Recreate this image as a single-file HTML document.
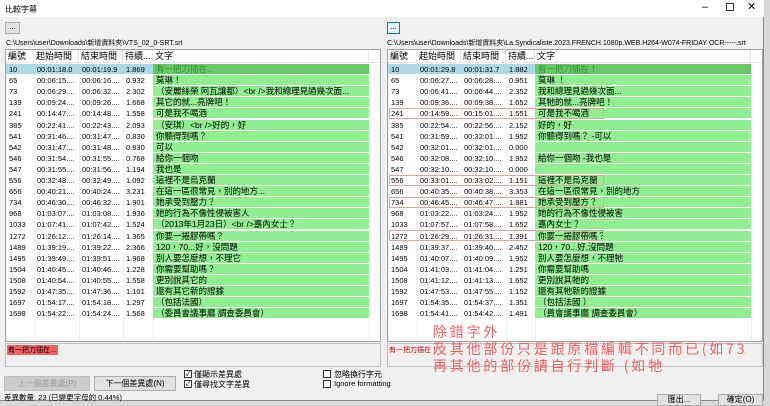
<!DOCTYPE html><html><head><meta charset="utf-8"><style>
*{margin:0;padding:0;box-sizing:border-box}
body{width:770px;height:403px;background:#d8d8d8;font-family:"Liberation Sans","Noto Sans CJK TC",sans-serif;position:relative;overflow:hidden;font-size:8px;color:#000}
.win{position:absolute;left:0;top:0;width:764px;height:401px;background:#f0f0f0;border-right:1px solid #888;border-bottom:1px solid #888}
.title{position:absolute;left:0;top:0;width:764px;height:17px;background:#fff;}
.a{position:absolute;white-space:nowrap}
.btn{position:absolute;background:#e1e1e1;border:1px solid #adadad;text-align:center;font-size:8px}
.grid{position:absolute;top:49px;height:293px;background:#fff;border:1px solid #a0a0a0;overflow:hidden}
.row{position:absolute;left:0;height:11px;width:100%;font-size:7.5px;line-height:11px}
.row span{position:absolute;top:0}
.hd{position:absolute;top:0;left:0;width:100%;height:13px;font-size:9px;line-height:13px;border-bottom:1px solid #e5e5e5}
.hd span{position:absolute;top:0;border-right:1px solid #e5e5e5;height:13px;padding-left:2px}
.g{position:absolute;top:0;height:10px;background:#90ee90}
.t{font-size:8.5px}
.vl{position:absolute;top:13px;bottom:0;width:1px;background:#efefef}
.rb{position:absolute;border:1px solid #e8a0a0;height:11px}
.cb{position:absolute;width:8px;height:8px;border:1px solid #333;background:#fff;font-size:7px;line-height:7px;text-align:center}
.note{position:absolute;color:#f06060;font-family:"WenQuanYi Zen Hei","Noto Sans CJK TC",sans-serif;font-size:14px;letter-spacing:2.8px;white-space:nowrap}
</style></head><body>
<div class="win">
<div class="title"><span class="a" style="left:5px;top:4px;font-size:8px">比較字幕</span>
<span class="a" style="left:702px;top:1px;font-size:11px">–</span>
<span class="a" style="left:726px;top:3px;width:8px;height:8px;border:1px solid #333"></span>
<span class="a" style="left:747px;top:0px;font-size:11px">✕</span></div>

<div class="btn" style="left:5px;top:22px;width:15px;height:12px;line-height:8px">...</div>
<div class="btn" style="left:387px;top:22px;width:13px;height:12px;line-height:8px;border-color:#0078d7;background:#e5f1fb">...</div>
<span class="a" style="left:6px;top:38px;font-size:7px">C:\Users\user\Downloads\新增資料夾\VTS_02_0-SRT.srt</span>
<span class="a" style="left:387px;top:38px;font-size:7px">C:\Users\user\Downloads\新增資料夾\La.Syndicaliste.2023.FRENCH.1080p.WEB.H264-W074-FRIDAY OCR-----.srt</span>

<div class="grid" id="L" style="left:5px;width:376px"></div>
<div class="grid" id="R" style="left:387px;width:376px"></div>

<div class="a" style="left:5px;top:343px;width:376px;height:24px;border:1px solid #c0c0c0;background:#f0f0f0"><span class="a" style="left:1px;top:1px;background:#f06060;font-size:7px;padding:0 1px">有一把刀插在…</span></div>
<div class="a" style="left:387px;top:343px;width:376px;height:24px;border:1px solid #c0c0c0;background:#f0f0f0"><span class="a" style="left:1px;top:1px;color:#c00;font-size:7px">有一把刀插在！</span></div>

<div class="btn" style="left:4px;top:376px;width:86px;height:15px;line-height:13px;color:#999;background:#ccc;border-color:#bfbfbf">上一個差異處(P)</div>
<div class="btn" style="left:94px;top:376px;width:82px;height:15px;line-height:13px">下一個差異處(N)</div>
<div class="cb" style="left:184px;top:370px">✓</div><span class="a" style="left:194px;top:369px">僅顯示差異處</span>
<div class="cb" style="left:184px;top:380px">✓</div><span class="a" style="left:194px;top:379px">僅尋找文字差異</span>
<div class="cb" style="left:323px;top:370px"></div><span class="a" style="left:334px;top:369px">忽略換行字元</span>
<div class="cb" style="left:323px;top:380px"></div><span class="a" style="left:334px;top:379px;font-size:7.5px">Ignore formatting</span>
<span class="a" style="left:4px;top:392px;font-size:7.5px">差異數量: 23 (已變更字母的 0.44%)</span>
<div class="btn" style="left:657px;top:394px;width:44px;height:12px;line-height:10px">匯出...</div>
<div class="btn" style="left:718px;top:394px;width:45px;height:12px;line-height:10px">確定(O)</div>

<div class="note" style="left:433px;top:322px">除錯字外</div>
<div class="note" style="left:433px;top:339px">及其他部份只是跟原檔編輯不同而已(如73</div>
<div class="note" style="left:433px;top:356px">再其他的部份請自行判斷 (如牠</div>
</div>
<script>
var L=[["10","00:01:18.0","00:01:19.9","1.869","有一把刀插在..."],["65","00:06:15....","00:06:16....","0.932","莫琳！"],["73","00:06:29....","00:06:32....","2.302","（安麗絲榮 阿瓦讓都）<br />我和總理見過幾次面..."],["139","00:09:24....","00:09:26....","1.668","其它的就...亮牌吧！"],["241","00:14:47....","00:14:48....","1.558","可是我不喝酒"],["385","00:22:41....","00:22:43....","2.093","（安琪）<br />好的，好"],["541","00:31:46....","00:31:47....","0.830","你聽得到嗎？"],["542","00:31:47....","00:31:48....","0.830","可以"],["546","00:31:54....","00:31:55....","0.768","給你一個吻"],["547","00:31:55....","00:31:56....","1.194","我也是"],["556","00:32:48....","00:32:49....","1.092","這裡不是烏克蘭"],["656","00:40:21....","00:40:24....","3.231","在這一區很常見，別的地方..."],["734","00:46:30....","00:46:32....","1.901","她承受到壓力？"],["968","01:03:07....","01:03:08....","1.936","她的行為不像性侵被害人"],["1033","01:07:41....","01:07:42....","1.524","（2013年1月23日）<br />嘉內女士？"],["1272","01:26:12....","01:26:14....","1.365","你要一捲膠帶嗎？"],["1489","01:39:19....","01:39:22....","2.366","120，70...好，沒問題"],["1495","01:39:49....","01:39:51....","1.968","別人要怎麼想，不理它"],["1504","01:40:45....","01:40:46....","1.228","你需要幫助嗎？"],["1508","01:40:54....","01:40:55....","1.558","更別說其它的"],["1592","01:47:35....","01:47:36....","1.101","還有其它新的證據"],["1697","01:54:17....","01:54:18....","1.297","（包括法國）"],["1698","01:54:22....","01:54:24....","1.568","（委員會議事廳 調查委員會）"]];
var R=[["10","00:01:29.8","00:01:31.7","1.882","有一把刀插在！"],["65","00:06:27....","00:06:28....","0.951","莫琳 ！"],["73","00:06:41....","00:06:44....","2.352","我和總理見過幾次面..."],["139","00:09:36....","00:09:38....","1.652","其牠的就...亮牌吧！"],["241","00:14:59....","00:15:01....","1.551","可是我不喝酒"],["385","00:22:54....","00:22:56....","2.152","好的，好"],["541","00:31:59....","00:32:01....","1.952","你聽得到嗎？  -可以"],["542","00:32:01....","00:32:01....","0.000",""],["546","00:32:08....","00:32:10....","1.952","給你一個吻  -我也是"],["547","00:32:10....","00:32:10....","0.000",""],["556","00:33:01....","00:33:02....","1.151","這裡不是烏克蘭"],["656","00:40:35....","00:40:38....","3.353","在這一區很常見，別的地方"],["734","00:46:45....","00:46:47....","1.881","她承受到壓方？"],["968","01:03:22....","01:03:24....","1.952","她的行為不像性侵被害"],["1033","01:07:57....","01:07:58....","1.652","嘉內女士？"],["1272","01:26:29....","01:26:31....","1.391","你要一捲膠帶嗎？"],["1489","01:39:37....","01:39:40....","2.452","120，70...好,沒問題"],["1495","01:40:07....","01:40:09....","1.952","別人要怎麼想，不理牠"],["1504","01:41:03....","01:41:04....","1.251","你需要幫助嗎"],["1508","01:41:12....","01:41:13....","1.652","更別說其牠的"],["1592","01:47:53....","01:47:55....","1.152","還有其牠新的證據"],["1697","01:54:35....","01:54:37....","1.351","（包括法國 ）"],["1698","01:54:41....","01:54:42....","1.491","（員會議事廳 調查委員會）"]];
function build(id,d,c,gw,boxes){var g=document.getElementById(id),h='<div class="hd">';var names=["編號","起始時間","結束時間","持續...","文字"];for(var i=0;i<5;i++){h+='<span style="left:'+c[i]+'px;width:'+((i<4?c[i+1]:c[4]+gw)-c[i])+'px">'+names[i]+'</span>';}h+='</div>';
for(var i=0;i<6;i++){h+='<div class="vl" style="left:'+(i<5?c[i]:c[4]+gw)+'px"></div>';}
for(var r=0;r<d.length;r++){var y=14+r*11.1;h+='<div class="row" style="top:'+y+'px">';if(r==0)h+='<div class="g" style="left:0;width:'+c[4]+'px;background:#add8e6"></div>';
h+='<div class="g" style="left:'+c[4]+'px;width:'+gw+'px;'+(r==0?'background:#66c966':'')+'"></div>';
for(var k=0;k<5;k++)h+='<span class="'+(k==4?'t':'')+'" style="left:'+(c[k]+3)+'px;'+(r==0&&k==4?'color:#3a8a3a':'')+'">'+d[r][k].replace(/</g,'&lt;')+'</span>';h+='</div>';if(boxes.indexOf(r)>=0)h+='<div class="rb" style="left:1px;top:'+(y-0.5)+'px;width:'+(c[4]+68)+'px"></div>';}
g.innerHTML=h;}
build("L",L,[0,28,73,117,147],216,[]);
build("R",R,[0,29,73,118,147],216,[4,10,12,15]);
</script>
</body></html>
